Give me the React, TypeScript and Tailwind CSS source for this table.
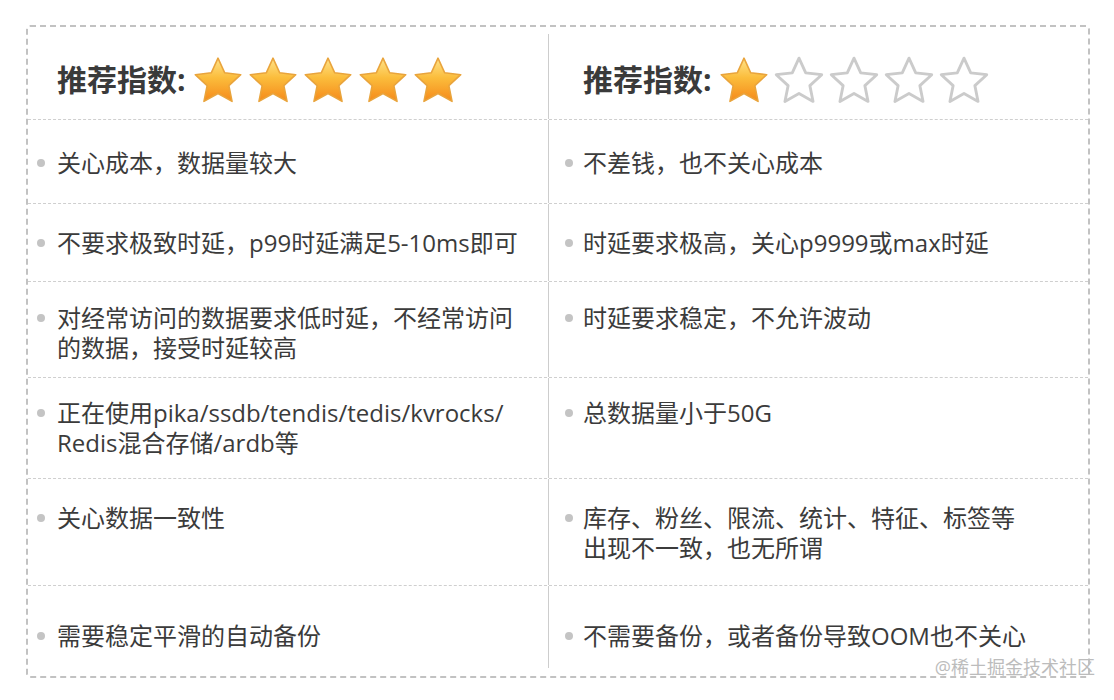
import React from 'react'

const rows = [
  { h: 'h-[84px]', pt: 'pt-[28px]', left: ['关心成本，数据量较大'], right: ['不差钱，也不关心成本'] },
  { h: 'h-[78px]', pt: 'pt-[24px]', left: ['不要求极致时延，p99时延满足5-10ms即可'], right: ['时延要求极高，关心p9999或max时延'] },
  { h: 'h-[96px]', pt: 'pt-[21px]', left: ['对经常访问的数据要求低时延，不经常访问', '的数据，接受时延较高'], right: ['时延要求稳定，不允许波动'] },
  { h: 'h-[101px]', pt: 'pt-[20px]', left: ['正在使用pika/ssdb/tendis/tedis/kvrocks/', 'Redis混合存储/ardb等'], right: ['总数据量小于50G'] },
  { h: 'h-[107px]', pt: 'pt-[24px]', left: ['关心数据一致性'], right: ['库存、粉丝、限流、统计、特征、标签等', '出现不一致，也无所谓'] },
  { h: 'h-[90px]', pt: 'pt-[35px]', left: ['需要稳定平滑的自动备份'], right: ['不需要备份，或者备份导致OOM也不关心'] },
]

const STAR = 'M50 8 L62.93 36.2 L93.75 39.79 L70.92 60.8 L77.04 91.21 L50 76 L22.96 91.21 L29.08 60.8 L6.25 39.79 L37.07 36.2 Z'

function Star({ filled }: { filled: boolean }) {
  return (
    <svg viewBox="0 0 100 100" className="h-[52px] w-[52px]">
      <defs>
        <linearGradient id="gold" x1="0" y1="0" x2="0" y2="1">
          <stop offset="0" stopColor="#ffe38a" />
          <stop offset="0.45" stopColor="#fbbd3c" />
          <stop offset="1" stopColor="#f5891a" />
        </linearGradient>
      </defs>
      {filled ? (
        <path d={STAR} fill="url(#gold)" stroke="#e9a43c" strokeWidth={3} strokeLinejoin="round" />
      ) : (
        <path d={STAR} fill="#fff" stroke="#cbcbcb" strokeWidth={5.5} strokeLinejoin="round" />
      )}
    </svg>
  )
}

function Header({ count }: { count: number }) {
  return (
    <div className="flex items-center">
      <span className="text-[30px] font-bold leading-none text-[#3a3a3a]">推荐指数:</span>
      <div className="ml-[6px] flex gap-[3px]">
        {[0, 1, 2, 3, 4].map((i) => (
          <Star key={i} filled={i < count} />
        ))}
      </div>
    </div>
  )
}

function Item({ lines, gap }: { lines: string[]; gap: string }) {
  return (
    <div className={`flex items-start ${gap}`}>
      <span className="mt-[11px] h-[8px] w-[8px] shrink-0 rounded-full bg-[#c4c4c4]" />
      <p className="text-[24px] leading-[30px] text-[#3b3b3b]">
        {lines.map((l, i) => (
          <React.Fragment key={i}>
            {i > 0 && <br />}
            {l}
          </React.Fragment>
        ))}
      </p>
    </div>
  )
}

export default function App() {
  return (
    <div
      className="relative h-[700px] w-[1114px] bg-white pl-[26px] pt-[25px]"
      style={{ fontFamily: '"Open Sans", "Noto Sans CJK SC", sans-serif' }}
    >
      <div className="w-[1064px] rounded-[4px] border-2 border-dashed border-[#c2c2c2]">
        {/* header */}
        <div className="grid h-[93px] grid-cols-[521px_1fr] border-b border-dashed border-[#cfcfcf]">
          <div className="mt-[7px] flex items-center border-r border-[#cdcdcd] pl-[29px] pt-[6px]">
            <Header count={5} />
          </div>
          <div className="flex items-center pl-[34px] pt-[13px]">
            <Header count={1} />
          </div>
        </div>

        {rows.map((r, idx) => (
          <div
            key={idx}
            className={`grid grid-cols-[521px_1fr] ${r.h} ${idx < rows.length - 1 ? 'border-b border-dashed border-[#cfcfcf]' : ''}`}
          >
            <div className={`border-r border-[#cdcdcd] pl-[9px] ${r.pt} ${idx === rows.length - 1 ? 'mb-[8px]' : ''}`}>
              <Item lines={r.left} gap="gap-[12px]" />
            </div>
            <div className={`pl-[16px] ${r.pt}`}>
              <Item lines={r.right} gap="gap-[10px]" />
            </div>
          </div>
        ))}
      </div>

      <span className="absolute right-[19px] top-[656px] text-[18px] leading-[22px] text-[#bcbcbc]">
        @稀土掘金技术社区
      </span>
    </div>
  )
}
